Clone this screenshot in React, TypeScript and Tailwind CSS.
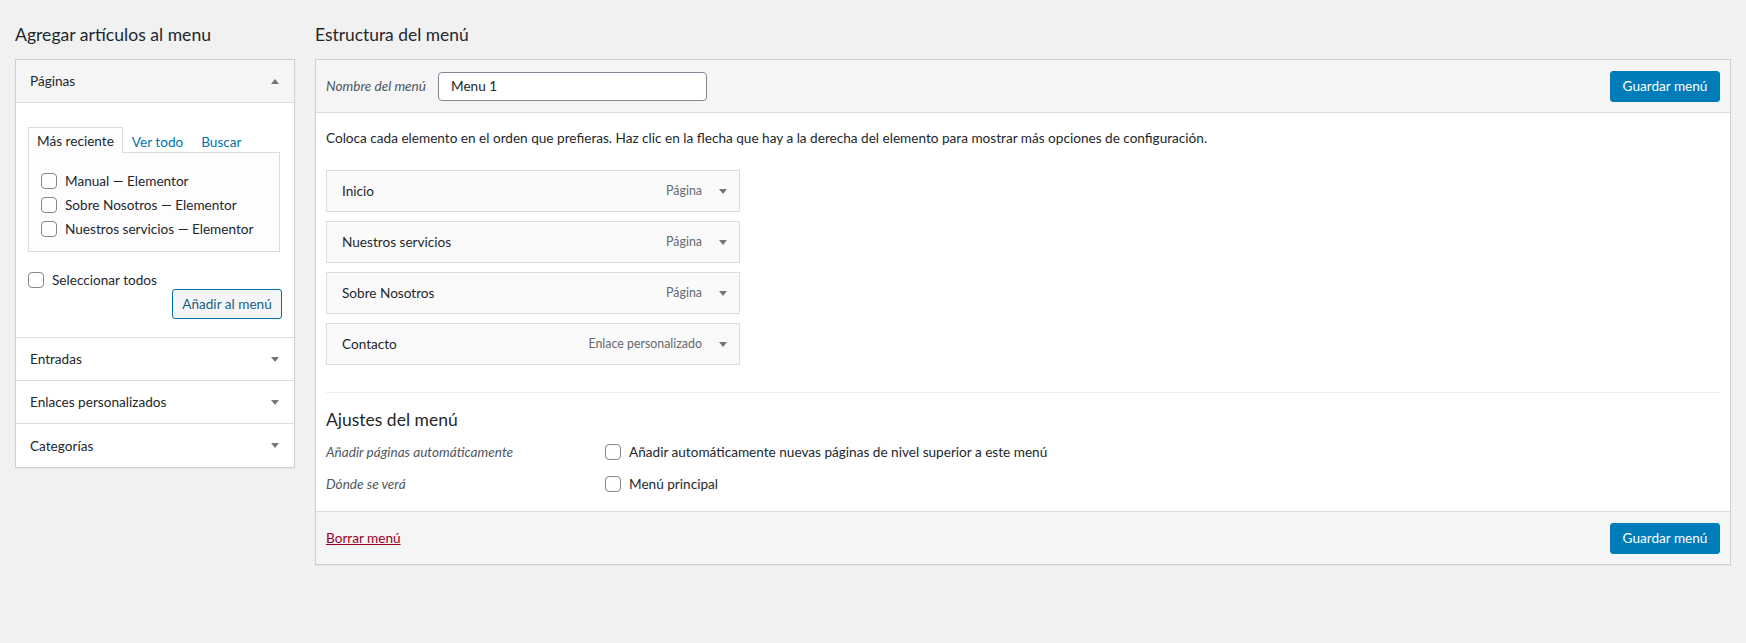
import type { ReactNode } from 'react';

function Caret({ up = false }: { up?: boolean }) {
  return (
    <svg width="8" height="5" viewBox="0 0 8 5" className="shrink-0">
      {up ? <polygon points="0,5 8,5 4,0" fill="#72777c" /> : <polygon points="0,0 8,0 4,5" fill="#72777c" />}
    </svg>
  );
}

function Box() {
  return <span className="inline-block h-[16px] w-[16px] shrink-0 rounded-[4px] border border-[#7e8993] bg-white" />;
}

function Check({ children }: { children: ReactNode }) {
  return (
    <label className="flex h-[24px] items-center gap-[8px] whitespace-nowrap">
      <Box />
      <span>{children}</span>
    </label>
  );
}

function AccordionRow({ title, last = false }: { title: string; last?: boolean }) {
  return (
    <div
      className={`flex h-[43px] items-center justify-between pl-[14px] pr-[15px] ${last ? 'h-[42px]' : 'border-b border-[#dcdcde]'}`}
    >
      <span>{title}</span>
      <Caret />
    </div>
  );
}

function MenuItem({ title, type }: { title: string; type: string }) {
  return (
    <div className="flex h-[42px] w-[414px] items-center justify-between border border-[#dcdcde] bg-[#fafafa] pl-[15px] pr-[12px]">
      <span>{title}</span>
      <div className="flex items-center gap-[17px]">
        <span className="text-[12.4px] text-[#646970]">{type}</span>
        <Caret />
      </div>
    </div>
  );
}

function SaveButton() {
  return (
    <button
      type="button"
      className="flex h-[31px] w-[110px] items-center justify-center rounded-[3px] border border-[#007cba] bg-[#007cba] text-white"
    >
      Guardar menú
    </button>
  );
}

export default function App() {
  return (
    <div className="min-h-[643px] bg-[#f1f1f1] px-[15px] font-['Lato',sans-serif] text-[13.6px] leading-[20px] text-[#23282d]">
      <div className="flex gap-[20px]">
        {/* columna izquierda */}
        <div className="w-[280px] shrink-0">
          <h2 className="h-[59px] pt-[22px] text-[17.6px] leading-[25px]">Agregar artículos al menu</h2>
          <div className="border border-[#ccd0d4] bg-white shadow-[0_1px_1px_rgba(0,0,0,0.04)]">
            <div className="flex h-[43px] items-center justify-between border-b border-[#dcdcde] bg-[#f5f5f5] pl-[14px] pr-[15px]">
              <span>Páginas</span>
              <Caret up />
            </div>
            <div className="border-b border-[#dcdcde] px-[12px] pt-[24px] pb-[18px]">
              <div className="flex items-end">
                <div className="relative z-10 -mb-px flex h-[26px] items-center border border-b-0 border-[#dcdcde] bg-[#fdfdfd] px-[8px]">
                  Más reciente
                </div>
                <span className="pl-[9px] pr-[9px] text-[#0073aa]">Ver todo</span>
                <span className="px-[9px] text-[#0073aa]">Buscar</span>
              </div>
              <div className="h-[100px] w-[252px] border border-[#dcdcde] bg-[#fdfdfd] px-[12px] pt-[16px]">
                <Check>Manual — Elementor</Check>
                <Check>Sobre Nosotros — Elementor</Check>
                <Check>Nuestros servicios — Elementor</Check>
              </div>
              <div className="mt-[20px] flex h-[16px] items-center gap-[8px]">
                <Box />
                <span>Seleccionar todos</span>
              </div>
              <div className="mt-[1px] flex justify-end">
                <button
                  type="button"
                  className="flex h-[30px] w-[110px] items-center justify-center rounded-[3px] border border-[#0071a1] bg-[#f3f5f6] text-[#1d5f80]"
                >
                  Añadir al menú
                </button>
              </div>
            </div>
            <AccordionRow title="Entradas" />
            <AccordionRow title="Enlaces personalizados" />
            <AccordionRow title="Categorías" last />
          </div>
        </div>

        {/* columna derecha */}
        <div className="flex-1">
          <h2 className="h-[59px] pt-[22px] text-[17.4px] leading-[25px]">Estructura del menú</h2>
          <div className="border border-[#ccd0d4] bg-white shadow-[0_1px_1px_rgba(0,0,0,0.04)]">
            <div className="flex h-[53px] items-center justify-between border-b border-[#dcdcde] bg-[#f5f5f5] px-[10px]">
              <div className="flex items-center">
                <span className="mr-[12px] italic text-[#50575e]">Nombre del menú</span>
                <div className="flex h-[29px] w-[269px] items-center rounded-[4px] border border-[#7e8993] bg-white px-[12px]">
                  Menu 1
                </div>
              </div>
              <SaveButton />
            </div>

            <div className="border-b border-[#dcdcde] px-[10px] pt-[15px] pb-[15px]">
              <p>
                Coloca cada elemento en el orden que prefieras. Haz clic en la flecha que hay a la derecha del elemento
                para mostrar más opciones de configuración.
              </p>
              <div className="mt-[22px] flex flex-col gap-[9px]">
                <MenuItem title="Inicio" type="Página" />
                <MenuItem title="Nuestros servicios" type="Página" />
                <MenuItem title="Sobre Nosotros" type="Página" />
                <MenuItem title="Contacto" type="Enlace personalizado" />
              </div>
              <div className="mt-[27px] border-t border-[#eeeeee]" />
              <h3 className="mt-[15px] text-[17.5px] leading-[24px]">Ajustes del menú</h3>
              <div className="mt-[8px] flex flex-col gap-[8px]">
                <div className="flex h-[24px] items-center">
                  <span className="w-[279px] italic text-[#50575e]">Añadir páginas automáticamente</span>
                  <Check>Añadir automáticamente nuevas páginas de nivel superior a este menú</Check>
                </div>
                <div className="flex h-[24px] items-center">
                  <span className="w-[279px] italic text-[#50575e]">Dónde se verá</span>
                  <Check>Menú principal</Check>
                </div>
              </div>
            </div>

            <div className="flex h-[52px] items-center justify-between bg-[#f5f5f5] px-[10px]">
              <span className="text-[#990026] underline">Borrar menú</span>
              <SaveButton />
            </div>
          </div>
        </div>
      </div>
    </div>
  );
}
